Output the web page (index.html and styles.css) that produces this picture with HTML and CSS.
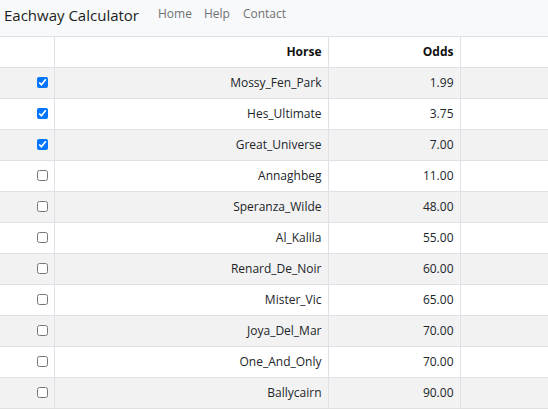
FILE: index.html
```html
<!DOCTYPE html>
<html lang="en">
<head>
<meta charset="utf-8">
<title>Eachway Calculator</title>
<link rel="stylesheet" href="styles.css">
</head>
<body>
<nav class="navbar">
  <span class="brand">Eachway Calculator</span>
  <ul class="nav">
    <li><a href="#">Home</a></li>
    <li><a href="#">Help</a></li>
    <li><a href="#">Contact</a></li>
  </ul>
</nav>
<table class="runners">
  <colgroup>
    <col class="c-check">
    <col class="c-horse">
    <col class="c-odds">
    <col class="c-extra">
  </colgroup>
  <thead>
    <tr><th></th><th>Horse</th><th>Odds</th><th></th></tr>
  </thead>
  <tbody>
    <tr><td><input type="checkbox" checked></td><td>Mossy_Fen_Park</td><td>1.99</td><td></td></tr>
    <tr><td><input type="checkbox" checked></td><td>Hes_Ultimate</td><td>3.75</td><td></td></tr>
    <tr><td><input type="checkbox" checked></td><td>Great_Universe</td><td>7.00</td><td></td></tr>
    <tr><td><input type="checkbox"></td><td>Annaghbeg</td><td>11.00</td><td></td></tr>
    <tr><td><input type="checkbox"></td><td>Speranza_Wilde</td><td>48.00</td><td></td></tr>
    <tr><td><input type="checkbox"></td><td>Al_Kalila</td><td>55.00</td><td></td></tr>
    <tr><td><input type="checkbox"></td><td>Renard_De_Noir</td><td>60.00</td><td></td></tr>
    <tr><td><input type="checkbox"></td><td>Mister_Vic</td><td>65.00</td><td></td></tr>
    <tr><td><input type="checkbox"></td><td>Joya_Del_Mar</td><td>70.00</td><td></td></tr>
    <tr><td><input type="checkbox"></td><td>One_And_Only</td><td>70.00</td><td></td></tr>
    <tr><td><input type="checkbox"></td><td>Ballycairn</td><td>90.00</td><td></td></tr>
  </tbody>
</table>
</body>
</html>
```
FILE: styles.css
```css
html, body {
  margin: 0;
  padding: 0;
  overflow: hidden;
  background: #ffffff;
}
body {
  font-family: "Open Sans", "Noto Sans", sans-serif;
  color: #212529;
}
.navbar {
  display: flex;
  align-items: flex-start;
  height: 37px;
  box-sizing: border-box;
  padding: 5px 4px 0;
  background: #f8f9fa;
  border-bottom: 1px solid #dee2e6;
}
.brand {
  font-size: 15px;
  line-height: 20px;
  color: #1b1f22;
  margin-right: 13px;
}
.nav {
  display: flex;
  list-style: none;
  margin: 0;
  padding: 0;
}
.nav a {
  display: block;
  padding: 0 6px;
  font-size: 12px;
  line-height: 18px;
  color: #6f7173;
  text-decoration: none;
}
.nav li:last-child a {
  padding-left: 7px;
}
.runners {
  table-layout: fixed;
  width: 548px;
  border-collapse: collapse;
  font-size: 12px;
  line-height: 18px;
}
.c-check { width: 54px; }
.c-horse { width: 274px; }
.c-odds { width: 132px; }
.c-extra { width: 88px; }
.runners th,
.runners td {
  padding: 6px 6px;
  height: 18px;
  text-align: right;
  border-bottom: 1px solid #dee2e6;
  border-right: 1px solid #dee2e6;
  vertical-align: middle;
}
.runners th:last-child,
.runners td:last-child {
  border-right: none;
}
.runners th {
  font-weight: 700;
  color: #111;
}
.runners tbody tr:nth-child(odd) td {
  background: #f2f2f2;
}
.runners input[type="checkbox"] {
  width: 11px;
  height: 11px;
  margin: 0;
  vertical-align: middle;
  position: relative;
  top: -1px;
}
```
